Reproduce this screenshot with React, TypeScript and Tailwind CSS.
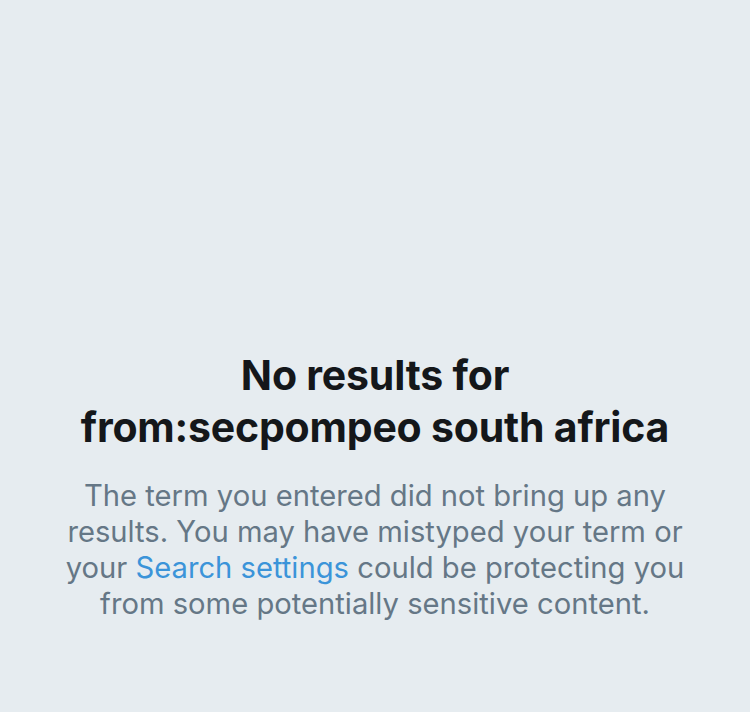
export default function App() {
  return (
    <div
      className="w-[750px] h-[712px] bg-[#e6ecf0] flex flex-col items-center pt-[349px]"
      style={{ fontFamily: 'Inter, "Noto Sans", sans-serif' }}
    >
      <h1 className="text-[41px] leading-[52px] font-bold text-[#14171a] text-center tracking-[-0.2px] whitespace-nowrap">
        No results for
        <br />
        from:secpompeo south africa
      </h1>
      <p className="mt-[25px] w-[740px] text-center text-[29.2px] leading-[36px] text-[#657786] whitespace-nowrap">
        The term you entered did not bring up any
        <br />
        results. You may have mistyped your term or
        <br />
        your <span className="text-[#3b94d9]">Search settings</span> could be protecting you
        <br />
        from some potentially sensitive content.
      </p>
    </div>
  );
}
